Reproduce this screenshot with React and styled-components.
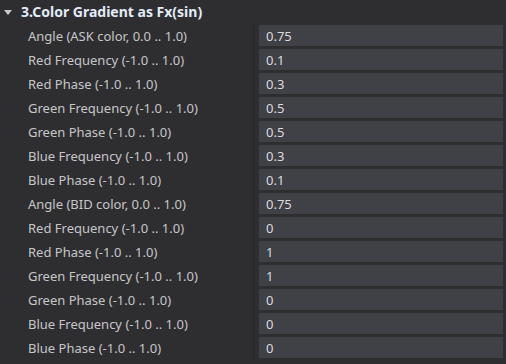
import React from "react";
import styled, { createGlobalStyle } from "styled-components";

const rows = [
  ["Angle (ASK color, 0.0 .. 1.0)", "0.75"],
  ["Red Frequency (-1.0 .. 1.0)", "0.1"],
  ["Red Phase (-1.0 .. 1.0)", "0.3"],
  ["Green Frequency (-1.0 .. 1.0)", "0.5"],
  ["Green Phase (-1.0 .. 1.0)", "0.5"],
  ["Blue Frequency (-1.0 .. 1.0)", "0.3"],
  ["Blue Phase (-1.0 .. 1.0)", "0.1"],
  ["Angle (BID color, 0.0 .. 1.0)", "0.75"],
  ["Red Frequency (-1.0 .. 1.0)", "0"],
  ["Red Phase (-1.0 .. 1.0)", "1"],
  ["Green Frequency (-1.0 .. 1.0)", "1"],
  ["Green Phase (-1.0 .. 1.0)", "0"],
  ["Blue Frequency (-1.0 .. 1.0)", "0"],
  ["Blue Phase (-1.0 .. 1.0)", "0"],
];

const App = () => {
  return (
    <>
      <Global />
      <Panel>
        <Header>
          <Arrow />
          <Title>3.Color Gradient as Fx(sin)</Title>
        </Header>
        <Body>
          {rows.map(([label, value], i) => (
            <Row key={i}>
              <Label>{label}</Label>
              <Cell>
                <Input>{value}</Input>
              </Cell>
            </Row>
          ))}
        </Body>
      </Panel>
    </>
  );
};

const Global = createGlobalStyle`
  html, body {
    margin: 0;
    padding: 0;
    background: #2e2e31;
  }
`;

const Panel = styled.div`
  width: 506px;
  height: 364px;
  background: #2e2e31;
  font-family: "Noto Sans", "Open Sans", sans-serif;
  overflow: hidden;
`;

const Header = styled.div`
  height: 22px;
  display: flex;
  align-items: center;
  padding-left: 4px;
`;

const Arrow = styled.span`
  width: 0;
  height: 0;
  border-left: 4.5px solid transparent;
  border-right: 4.5px solid transparent;
  border-top: 5px solid #c8c8cc;
  margin-top: 2px;
`;

const Title = styled.span`
  margin-left: 9px;
  font-size: 14px;
  font-weight: 700;
  color: #e2ebf7;
`;

const Body = styled.div`
  display: flex;
  flex-direction: column;
`;

const Row = styled.div`
  display: grid;
  grid-template-columns: 253px 1fr;
  height: 24px;
`;

const Label = styled.div`
  padding: 3px 0 0 28px;
  display: flex;
  align-items: center;
  font-size: 13px;
  color: #c6c6c8;
  white-space: nowrap;
`;

const Cell = styled.div`
  border-left: 1px solid #26262a;
  padding: 3px 3px 0 5px;
`;

const Input = styled.div`
  height: 21px;
  background: #404047;
  display: flex;
  align-items: center;
  padding-left: 7px;
  font-size: 13px;
  color: #dcdcde;
`;

export default App;
